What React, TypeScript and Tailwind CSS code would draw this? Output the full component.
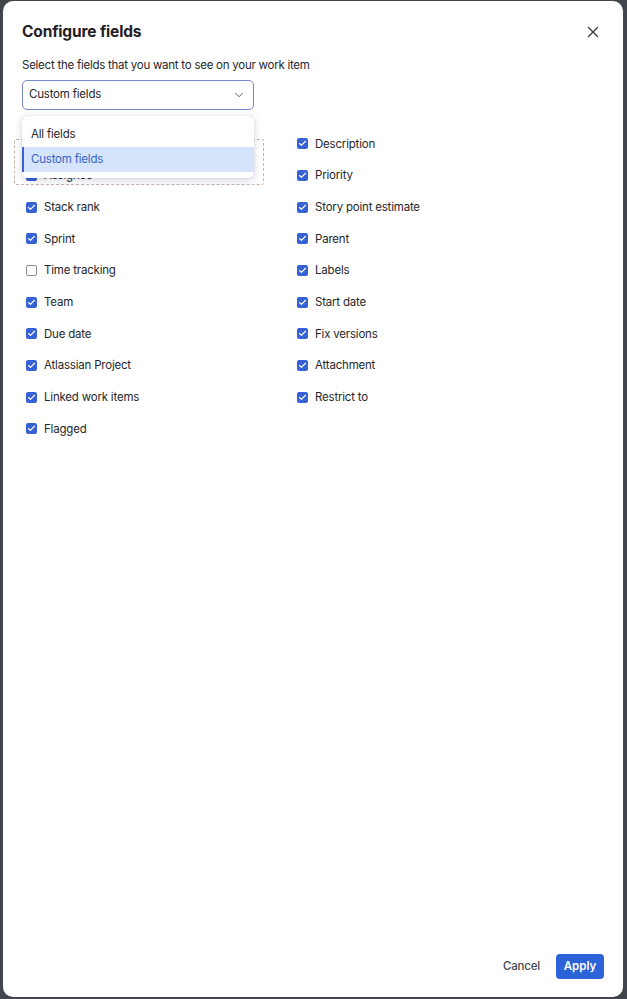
import { ChevronDown, X, Check } from 'lucide-react';

// Field lists shown in the two columns
const leftFields: { label: string; checked: boolean }[] = [
  { label: 'Summary', checked: true },
  { label: 'Assignee', checked: true },
  { label: 'Stack rank', checked: true },
  { label: 'Sprint', checked: true },
  { label: 'Time tracking', checked: false },
  { label: 'Team', checked: true },
  { label: 'Due date', checked: true },
  { label: 'Atlassian Project', checked: true },
  { label: 'Linked work items', checked: true },
  { label: 'Flagged', checked: true },
];

const rightFields: { label: string; checked: boolean }[] = [
  { label: 'Description', checked: true },
  { label: 'Priority', checked: true },
  { label: 'Story point estimate', checked: true },
  { label: 'Parent', checked: true },
  { label: 'Labels', checked: true },
  { label: 'Start date', checked: true },
  { label: 'Fix versions', checked: true },
  { label: 'Attachment', checked: true },
  { label: 'Restrict to', checked: true },
];

function FieldRow({ label, checked }: { label: string; checked: boolean }) {
  return (
    <div className="flex items-center gap-[7px] h-[31.67px]">
      {checked ? (
        <span className="w-[11px] h-[11px] rounded-[2px] bg-[#3762d3] flex items-center justify-center">
          <Check size={9} strokeWidth={3} className="text-white" />
        </span>
      ) : (
        <span className="w-[11px] h-[11px] rounded-[2px] border border-[#8a8d95] bg-white" />
      )}
      <span className="text-[11.5px] leading-[16px] tracking-[-0.2px] text-[#26272b]">{label}</span>
    </div>
  );
}

export default function App() {
  return (
    <div
      className="w-full h-[999px] bg-[#43454d] pl-[3px] pr-[4px] pt-[1px] pb-[2px]"
      style={{ fontFamily: 'Inter, "Noto Sans", sans-serif' }}
    >
      <div className="h-full bg-white rounded-[10px] flex flex-col px-[19px]">
        {/* Header */}
        <div className="flex items-center justify-between pt-[21px]">
          <h1 className="text-[15.5px] leading-[20px] font-bold tracking-[-0.15px] text-[#1f2024]">Configure fields</h1>
          <button className="w-[20px] h-[20px] flex items-center justify-center text-[#3b3d42] mr-[1px]">
            <X size={18} strokeWidth={1.8} />
          </button>
        </div>

        <p className="mt-[15px] text-[11.5px] leading-[16px] tracking-[-0.25px] text-[#26272b]">
          Select the fields that you want to see on your work item
        </p>

        {/* Select + open menu */}
        <div className="relative mt-[7px] w-[232px]">
          <div className="h-[30px] border-[1.5px] border-[#7689c9] rounded-[5px] flex items-center justify-between pl-[6px] pr-[7px]">
            <span className="text-[11.5px] tracking-[-0.2px] text-[#26272b]">Custom fields</span>
            <ChevronDown size={14} strokeWidth={1.6} className="text-[#5b5e66]" />
          </div>

          <div className="absolute left-[-8px] top-[59px] w-[250px] h-[46px] border border-dashed border-[#c9b5a5] rounded-[2px] z-10" />

          <div className="absolute left-0 top-[36px] w-[232px] bg-white rounded-[5px] shadow-[0_2px_8px_rgba(9,30,66,0.18),0_0_1px_rgba(9,30,66,0.25)] pt-[7px] pb-[6px] z-20">
            <div className="h-[24px] flex items-center pl-[9px] text-[11.5px] tracking-[-0.2px] text-[#26272b]">All fields</div>
            <div className="h-[25px] flex items-center pl-[7px] text-[11.5px] tracking-[-0.2px] text-[#3764c4] bg-[#d5e3fb] border-l-2 border-[#3c63cf]">
              Custom fields
            </div>
          </div>
        </div>

        {/* Field columns */}
        <div className="mt-[18px] pl-[4px] grid grid-cols-[271px_1fr]">
          <div className="flex flex-col">
            {leftFields.map((f) => (
              <FieldRow key={f.label} label={f.label} checked={f.checked} />
            ))}
          </div>
          <div className="flex flex-col">
            {rightFields.map((f) => (
              <FieldRow key={f.label} label={f.label} checked={f.checked} />
            ))}
          </div>
        </div>

        {/* Footer */}
        <div className="mt-auto pb-[18px] flex items-center justify-end gap-[16px]">
          <button className="text-[11.5px] font-medium tracking-[-0.2px] text-[#44464d]">Cancel</button>
          <button className="w-[48px] h-[25px] rounded-[4px] bg-[#2d63d8] text-white text-[11.5px] font-semibold">
            Apply
          </button>
        </div>
      </div>
    </div>
  );
}
